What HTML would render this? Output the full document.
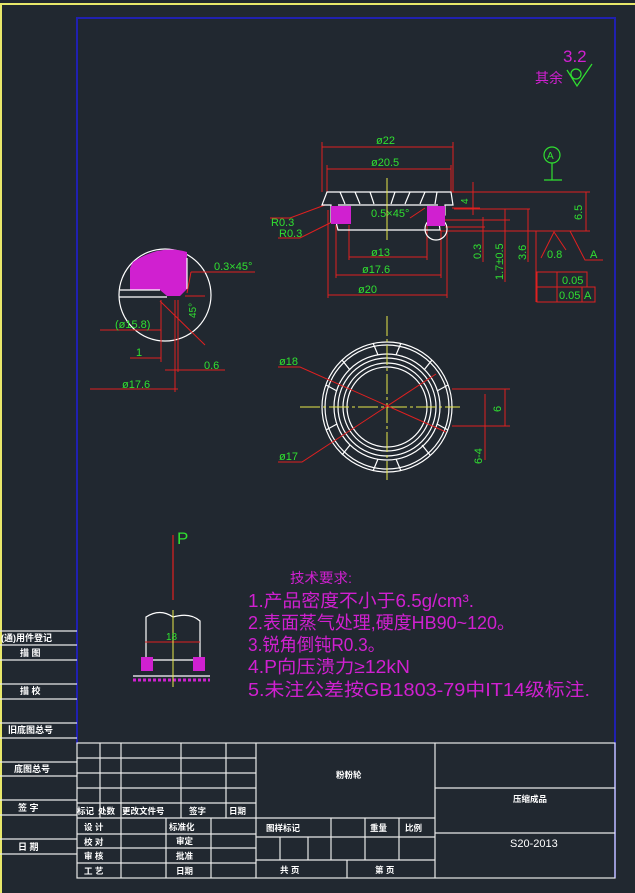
<!DOCTYPE html>
<html><head><meta charset="utf-8"><style>
html,body{margin:0;padding:0;background:#212830;}
svg{display:block}
text{font-family:"Liberation Sans","Noto Sans CJK SC",sans-serif;}
</style></head><body>
<svg width="635" height="893" viewBox="0 0 635 893" xmlns="http://www.w3.org/2000/svg">
<rect width="635" height="893" fill="#212830"/>
<polyline points="1,893 1,4 635,4" fill="none" stroke="#e8e86a" stroke-width="2"/>
<polyline points="77,744 77,18 615,18 615,878" fill="none" stroke="#2020b0" stroke-width="2"/>

<g stroke="#e8e8e8" stroke-width="1.2" fill="none">
<line x1="0" y1="631" x2="77" y2="631"/><line x1="0" y1="645" x2="77" y2="645"/>
<line x1="0" y1="660" x2="77" y2="660"/><line x1="0" y1="684" x2="77" y2="684"/>
<line x1="0" y1="699" x2="77" y2="699"/><line x1="0" y1="723" x2="77" y2="723"/>
<line x1="0" y1="738" x2="77" y2="738"/><line x1="0" y1="762" x2="77" y2="762"/>
<line x1="0" y1="776" x2="77" y2="776"/><line x1="0" y1="800" x2="77" y2="800"/>
<line x1="0" y1="815" x2="77" y2="815"/><line x1="0" y1="839" x2="77" y2="839"/>
<line x1="0" y1="854" x2="77" y2="854"/>
</g>
<g fill="#ffffff" font-size="9" font-weight="bold">
<text x="1" y="641">(通)用件登记</text>
<text x="20" y="656">描  图</text>
<text x="20" y="694">描  校</text>
<text x="8" y="733">旧底图总号</text>
<text x="14" y="772">底图总号</text>
<text x="18" y="811">签   字</text>
<text x="18" y="850">日   期</text>
</g>

<g stroke="#e8e8e8" stroke-width="1.2" fill="none">
<rect x="77" y="743" width="538" height="135"/>
<line x1="77" y1="758" x2="256" y2="758"/><line x1="77" y1="773" x2="256" y2="773"/>
<line x1="77" y1="788" x2="256" y2="788"/><line x1="77" y1="803" x2="256" y2="803"/>
<line x1="77" y1="818" x2="435" y2="818"/><line x1="77" y1="834" x2="256" y2="834"/>
<line x1="77" y1="848" x2="256" y2="848"/><line x1="77" y1="863" x2="256" y2="863"/>
<line x1="100" y1="743" x2="100" y2="818"/><line x1="121" y1="743" x2="121" y2="878"/>
<line x1="181" y1="743" x2="181" y2="818"/><line x1="226" y1="743" x2="226" y2="818"/>
<line x1="166" y1="818" x2="166" y2="878"/><line x1="211" y1="818" x2="211" y2="878"/>
<line x1="256" y1="743" x2="256" y2="878"/><line x1="435" y1="743" x2="435" y2="878"/>
<line x1="435" y1="788" x2="615" y2="788"/><line x1="435" y1="833" x2="615" y2="833"/>
<line x1="256" y1="837" x2="435" y2="837"/><line x1="256" y1="860" x2="435" y2="860"/>
<line x1="331" y1="818" x2="331" y2="860"/><line x1="365" y1="818" x2="365" y2="860"/>
<line x1="399" y1="818" x2="399" y2="860"/><line x1="280" y1="837" x2="280" y2="860"/>
<line x1="308" y1="837" x2="308" y2="860"/><line x1="347" y1="860" x2="347" y2="878"/>
</g>
<g fill="#ffffff" font-size="8.5" font-weight="bold">
<text x="77" y="814">标记</text><text x="98" y="814">处数</text><text x="122" y="814">更改文件号</text>
<text x="189" y="814">签字</text><text x="229" y="814">日期</text>
<text x="84" y="830">设 计</text><text x="169" y="830">标准化</text>
<text x="84" y="845">校 对</text><text x="176" y="844">审定</text>
<text x="84" y="859">审 核</text><text x="176" y="859">批准</text>
<text x="84" y="874">工 艺</text><text x="176" y="874">日期</text>
<text x="336" y="778">粉粉轮</text>
<text x="266" y="831">图样标记</text><text x="370" y="831">重量</text><text x="405" y="831">比例</text>
<text x="280" y="873">共   页</text><text x="375" y="873">第   页</text>
<text x="513" y="802">压缩成品</text>
<text x="510" y="847" font-weight="normal" font-size="11">S20-2013</text>
</g>

<text x="563" y="62" fill="#d020d0" font-size="17">3.2</text>
<text x="535" y="83" fill="#d020d0" font-size="14">其余</text>
<g stroke="#30e030" fill="none" stroke-width="1.2">
<path d="M567 70 L577 86 L592 64"/><circle cx="576" cy="74" r="5"/>
<circle cx="552" cy="155" r="8"/><line x1="552" y1="163" x2="552" y2="180"/><line x1="544" y1="180" x2="562" y2="180"/>
</g>
<text x="547" y="159" fill="#30e030" font-size="10">A</text>

<g stroke="#e02020" stroke-width="1" fill="none">
<line x1="322" y1="147" x2="453" y2="147"/><line x1="322" y1="142" x2="322" y2="192"/><line x1="453" y1="142" x2="453" y2="192"/>
<line x1="327" y1="169" x2="451" y2="169"/><line x1="327" y1="165" x2="327" y2="192"/><line x1="451" y1="165" x2="451" y2="192"/>
<line x1="349" y1="257" x2="427" y2="257"/><line x1="349" y1="225" x2="349" y2="260"/><line x1="427" y1="225" x2="427" y2="260"/>
<line x1="336" y1="275" x2="441" y2="275"/><line x1="336" y1="225" x2="336" y2="278"/><line x1="441" y1="230" x2="441" y2="278"/>
<line x1="328" y1="295" x2="447" y2="295"/><line x1="328" y1="210" x2="328" y2="298"/><line x1="447" y1="230" x2="447" y2="298"/>
<line x1="452" y1="192" x2="590" y2="192"/><line x1="452" y1="208" x2="480" y2="208"/>
<line x1="454" y1="209" x2="530" y2="209"/><line x1="445" y1="220" x2="510" y2="220"/>
<line x1="440" y1="231" x2="590" y2="231"/><line x1="445" y1="227" x2="485" y2="227"/>
<line x1="473" y1="182" x2="473" y2="215"/><line x1="586" y1="192" x2="586" y2="231"/>
<line x1="483" y1="217" x2="483" y2="262"/><line x1="505" y1="209" x2="505" y2="282"/><line x1="528" y1="209" x2="528" y2="262"/>
<line x1="536" y1="231" x2="536" y2="302"/>
<path d="M541 258 L554 232 L566 250"/><path d="M570 231 L585 260 L603 260"/>
<rect x="537" y="272" width="20" height="15"/><rect x="557" y="272" width="30" height="15"/>
<rect x="537" y="287" width="20" height="15"/><rect x="557" y="287" width="25" height="15"/><rect x="582" y="287" width="13" height="15"/>
<path d="M270 218 L290 218 L325 205"/><path d="M278 238 L300 238 L332 222"/>
<path d="M410 218 L425 208"/>
</g>
<g fill="#30e030" font-size="11">
<text x="376" y="144">ø22</text><text x="371" y="166">ø20.5</text>
<text x="371" y="217">0.5×45°</text>
<text x="371" y="256">ø13</text><text x="362" y="273">ø17.6</text><text x="358" y="293">ø20</text>
<text x="271" y="226">R0.3</text><text x="279" y="237">R0.3</text>
<text x="547" y="258">0.8</text><text x="590" y="258">A</text>
<text x="562" y="284">0.05</text><text x="559" y="299">0.05</text><text x="584" y="299">A</text>
<text transform="translate(468,204) rotate(-90)" font-size="10">4</text>
<text transform="translate(582,220) rotate(-90)">6.5</text>
<text transform="translate(481,259) rotate(-90)">0.3</text>
<text transform="translate(503,280) rotate(-90)">1.7±0.5</text>
<text transform="translate(526,260) rotate(-90)">3.6</text>
</g>
<g stroke="#ffffff" stroke-width="1.2" fill="none">
<path d="M327 192 L451 192 L453 205 L445 205 L445 215 L438 215 L440 230 L338 230 L336 222 L331 222 L331 205 L322 205 Z"/>
<line x1="338" y1="205" x2="438" y2="205"/>
<path d="M340 192 L345 204 M355 192 L360 204 M370 192 L374 204 M395 192 L391 204 M410 192 L405 204 M425 192 L420 204 M437 192 L435 204"/>
<circle cx="436" cy="229" r="11"/>
</g>
<rect x="331" y="206" width="20" height="18" fill="#d020d0"/>
<rect x="427" y="206" width="18" height="20" fill="#d020d0"/>
<line x1="387" y1="178" x2="387" y2="240" stroke="#e8e84a" stroke-width="1"/>

<circle cx="165" cy="295" r="46" fill="none" stroke="#ffffff" stroke-width="1.2"/>
<path d="M130 268 L130 290 L160 290 L167 296 L180 296 L187 289 L187 252 Q160 244 133 262 Z" fill="#d020d0"/>
<g stroke="#ffffff" fill="none" stroke-width="1.2"><line x1="120" y1="290" x2="160" y2="290"/><line x1="119" y1="297" x2="167" y2="297"/><line x1="187" y1="258" x2="187" y2="289"/></g>
<g stroke="#e02020" fill="none" stroke-width="1">
<line x1="191" y1="272" x2="255" y2="272"/><line x1="191" y1="272" x2="187" y2="293"/>
<line x1="160" y1="301" x2="205" y2="345"/>
<line x1="161" y1="300" x2="161" y2="362"/><line x1="175" y1="300" x2="175" y2="392"/><line x1="178" y1="300" x2="178" y2="372"/>
<line x1="100" y1="330" x2="161" y2="330"/><line x1="130" y1="358" x2="161" y2="358"/>
<line x1="165" y1="370" x2="225" y2="370"/><line x1="90" y1="389" x2="178" y2="389"/>
<line x1="185" y1="296" x2="205" y2="296"/>
</g>
<g fill="#30e030" font-size="11">
<text x="214" y="270">0.3×45°</text><text x="115" y="328">(ø15.8)</text>
<text x="136" y="356">1</text><text x="204" y="369">0.6</text><text x="122" y="388">ø17.6</text>
<text transform="translate(196,318) rotate(-90)" font-size="10">45°</text>
</g>

<g stroke="#ffffff" fill="none" stroke-width="1.2">
<circle cx="387" cy="407" r="65"/><circle cx="387" cy="407" r="62"/>
<circle cx="387" cy="407" r="53"/><circle cx="387" cy="407" r="49"/>
<circle cx="387" cy="407" r="44"/><circle cx="387" cy="407" r="40"/>
<path d="M373 343 L378 355 M401 343 L396 355 M432 360 L424 370 M448 385 L437 391 M448 430 L437 424 M430 455 L422 445 M401 471 L396 459 M373 471 L378 459 M342 455 L350 445 M326 430 L337 424 M326 385 L337 391 M342 360 L350 370"/>
</g>
<g stroke="#e8e84a" stroke-width="1" stroke-dasharray="20,3,3,3"><line x1="300" y1="407" x2="460" y2="407"/><line x1="387" y1="316" x2="387" y2="480"/></g>
<g stroke="#e02020" fill="none" stroke-width="1">
<path d="M278 367 L300 367 L446 432"/><path d="M278 462 L302 462 L436 374"/>
<line x1="452" y1="389" x2="510" y2="389"/><line x1="452" y1="426" x2="510" y2="426"/>
<line x1="505" y1="389" x2="505" y2="426"/><line x1="485" y1="394" x2="485" y2="460"/>
</g>
<g fill="#30e030" font-size="11">
<text x="279" y="365">ø18</text><text x="279" y="460">ø17</text>
<text transform="translate(501,412) rotate(-90)">6</text>
<text transform="translate(482,464) rotate(-90)">6-4</text>
</g>

<line x1="173" y1="535" x2="173" y2="600" stroke="#e02020" stroke-width="1.2"/>
<text x="177" y="544" fill="#30e030" font-size="17">P</text>
<g stroke="#ffffff" fill="none" stroke-width="1.2">
<path d="M146 657 L146 617 Q160 608 173 617 Q190 612 200 621 L200 657"/>
<line x1="141" y1="660" x2="205" y2="660"/><line x1="133" y1="676" x2="210" y2="676"/>
</g>
<rect x="141" y="657" width="12" height="14" fill="#d020d0"/><rect x="193" y="657" width="12" height="14" fill="#d020d0"/>
<line x1="133" y1="680" x2="210" y2="680" stroke="#d020d0" stroke-width="3" stroke-dasharray="3,2"/>
<line x1="145" y1="642" x2="200" y2="642" stroke="#e02020"/>
<line x1="173" y1="610" x2="173" y2="687" stroke="#e8e84a"/>
<text x="166" y="640" fill="#30e030" font-size="10">18</text>

<g fill="#d020d0">
<text x="290" y="583" font-size="14" textLength="62" lengthAdjust="spacingAndGlyphs">技术要求:</text>
<text x="248" y="607" font-size="18" textLength="226" lengthAdjust="spacingAndGlyphs">1.产品密度不小于6.5g/cm³.</text>
<text x="248" y="629" font-size="18" textLength="267" lengthAdjust="spacingAndGlyphs">2.表面蒸气处理,硬度HB90~120。</text>
<text x="248" y="651" font-size="18" textLength="137" lengthAdjust="spacingAndGlyphs">3.锐角倒钝R0.3。</text>
<text x="248" y="673" font-size="18" textLength="162" lengthAdjust="spacingAndGlyphs">4.P向压溃力≥12kN</text>
<text x="248" y="696" font-size="18" textLength="342" lengthAdjust="spacingAndGlyphs">5.未注公差按GB1803-79中IT14级标注.</text>
</g>
</svg>
</body></html>
